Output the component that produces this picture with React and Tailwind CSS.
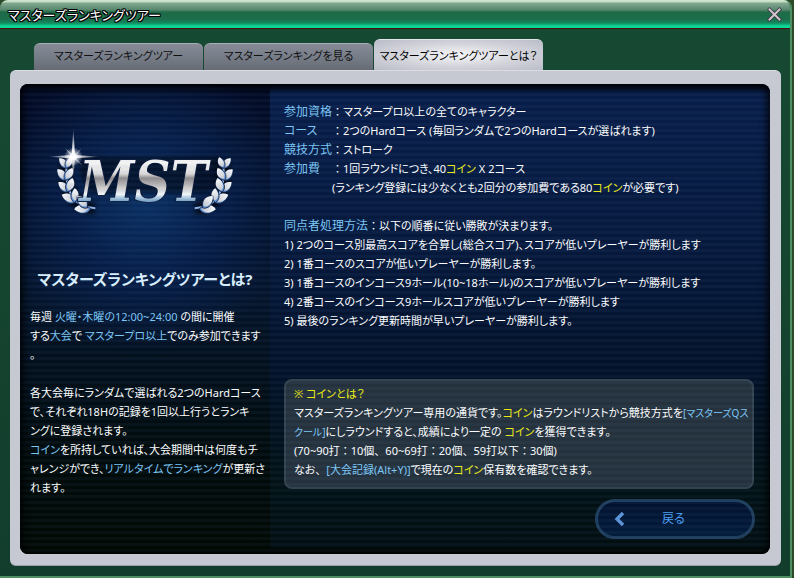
import React from "react";

const LEAVES = [
  [140, 172, -36, 34],
  [140, 172, 26, 32],
  [137, 208, -36, 38],
  [137, 208, 34, 38],
  [144, 243, -44, 38],
  [144, 243, 22, 40],
  [164, 274, -60, 42],
  [164, 274, 4, 38],
  [208, 297, -88, 44],
  [200, 291, -38, 42],
];

function Laurel() {
  return (
    <g>
      <path d="M224 296 Q128 288 140 150" fill="none" stroke="#000" strokeWidth="40" opacity="0.6" filter="url(#soft)" />
      <path d="M226 295 Q128 290 140 158" fill="none" stroke="#8fb4e6" strokeWidth="6" />
      {LEAVES.map(([x, y, angle, length], i) => (
        <g key={i} transform={`translate(${x} ${y}) rotate(${angle}) scale(${length / 34})`}>
          <path d="M0 3C-15 -4 -14 -24 -2 -35C11 -26 15 -10 0 3Z" fill="#5f93dc" stroke="#111c33" strokeWidth="2" />
          <path d="M1 -2C-12 -8 -11 -24 -2 -35C10 -27 14 -13 1 -2Z" fill="url(#leaf)" />
        </g>
      ))}
    </g>
  );
}

function Logo() {
  return (
    <svg viewBox="75 48 600 276" className="h-[92px] w-[200px]" role="img" aria-label="MST">
      <defs>
        <linearGradient id="metal" x1="0" y1="0" x2="0" y2="1">
          <stop offset="0.2" stopColor="#f4f4f4" />
          <stop offset="0.38" stopColor="#dedcdc" />
          <stop offset="0.45" stopColor="#8f8b8c" />
          <stop offset="0.6" stopColor="#cfcccc" />
          <stop offset="0.7" stopColor="#eef4f8" />
          <stop offset="0.79" stopColor="#7fa9cd" />
        </linearGradient>
        <linearGradient id="leaf" x1="0" y1="0" x2="0" y2="1">
          <stop offset="0" stopColor="#ffffff" />
          <stop offset="1" stopColor="#c3c6ce" />
        </linearGradient>
        <radialGradient id="flare">
          <stop offset="0" stopColor="#fff" />
          <stop offset="0.4" stopColor="#fff" stopOpacity="0.7" />
          <stop offset="1" stopColor="#fff" stopOpacity="0" />
        </radialGradient>
        <filter id="soft" x="-30%" y="-30%" width="160%" height="160%">
          <feGaussianBlur stdDeviation="6" />
        </filter>
      </defs>
      <path
        d="M180 140H600V215L560 250H215L180 200Z"
        fill="#000"
        opacity="0.45"
        filter="url(#soft)"
      />
      <Laurel />
      <g transform="translate(750 0) scale(-1 1)">
        <Laurel />
      </g>
      <text
        x="178"
        y="273"
        fontFamily="'DejaVu Serif Condensed', 'Liberation Serif', serif"
        fontWeight="700"
        fontStyle="italic"
        fontSize="166"
        fill="url(#metal)"
        stroke="#0d1c3c"
        strokeWidth="6"
        paintOrder="stroke"
      >
        MST
      </text>
      <circle cx="160" cy="140" r="28" fill="url(#flare)" />
      <path
        d="M160 52L165 135L240 140L165 145L160 205L155 145L80 140L155 135Z"
        fill="url(#flare)"
      />
      <path d="M135 115L162 137L185 115L163 141L188 167L160 144L133 165L157 140Z" fill="#fff" opacity="0.7" />
      <circle cx="160" cy="140" r="10" fill="#fff" />
    </svg>
  );
}

const Blue = ({ children }) => <span className="text-[#7cc6f5]">{children}</span>;
const Yellow = ({ children }) => <span className="text-[#ecec13]">{children}</span>;
const Wide = ({ children }) => <span className="[font-feature-settings:normal]">{children}</span>;

function Tab({ active, children }) {
  return (
    <button
      type="button"
      aria-pressed={Boolean(active)}
      className={
        active
          ? "h-[31px] w-[169px] rounded-t-md border-t border-[#e4e5ea] bg-[radial-gradient(ellipse_at_center,#f6f6f8_0%,#d2d3da_55%,#b9bbc8_100%)] whitespace-nowrap text-black"
          : "h-[27px] w-[169px] rounded-t-md border-t border-[#a9adb6] bg-linear-to-b from-[#868b96] via-[#777d88] to-[#666b74] pb-1 whitespace-nowrap text-[#111]"
      }
    >
      {children}
    </button>
  );
}

function Term({ label, children }) {
  return (
    <div className="flex">
      <dt className="w-12 text-xs leading-[19px] text-[#7cc6f5]">{label}</dt>
      <dd>{children}</dd>
    </div>
  );
}

export default function App() {
  return (
    <div className="min-h-screen bg-[#2c4a28] pr-0.5 font-['Noto_Sans','Noto_Sans_CJK_JP',sans-serif] text-[11px] leading-[19px] [font-feature-settings:'palt']">
      <main className="flex min-h-screen flex-col overflow-hidden rounded-t-lg border-r-2 border-b-2 border-[#4f8f63] bg-linear-to-b from-[#174a33] via-[#15442f] to-[#123d2d]">
        <header className="flex h-[29px] items-center justify-between border-b border-[#4d0a0c] bg-[linear-gradient(#d3e6d0_0px,#c0dcc0_2px,#83a991_3px,#56866c_10px,#1e6a47_12px,#1c6e4b_19px,#12895f_23px,#0ed596_26px,#08dd9a_28px)] pr-2 pl-2">
          <h1 className="pt-0.5 text-[13px] text-white [text-shadow:1px_0_#000,-1px_0_#000,0_1px_#000,0_-1px_#000,1px_1px_#000,-1px_-1px_#000,1px_-1px_#000,-1px_1px_#000]">
            マスターズランキングツアー
          </h1>
          <button type="button" aria-label="閉じる" className="size-[15px]">
            <svg viewBox="0 0 15 15" className="size-[15px]">
              <path d="M2.5 2.5L12.5 12.5M12.5 2.5L2.5 12.5" stroke="#3c3040" strokeWidth="3.4" strokeLinecap="square" />
              <path d="M2.5 2.5L12.5 12.5M12.5 2.5L2.5 12.5" stroke="#cfc6cc" strokeWidth="2" strokeLinecap="square" />
            </svg>
          </button>
        </header>

        <nav className="mt-2.5 ml-[34px] flex items-end gap-px">
          <Tab>マスターズランキングツアー</Tab>
          <Tab>マスターズランキングを見る</Tab>
          <Tab active>マスターズランキングツアーとは？</Tab>
        </nav>

        <section className="mr-[9px] mb-2.5 ml-2.5 flex flex-1 rounded-md border-t border-b border-t-[#dcdde2] border-b-[#9a9eac] bg-[#c7c9d2] pt-[13px] pr-[11px] pb-[11px] pl-2.5">
          <div className="relative flex min-w-0 flex-1 overflow-hidden rounded-lg bg-linear-to-b from-[#04112f] via-[#03101f] to-[#010805]">
            <article className="w-[250px] shrink-0 bg-[radial-gradient(ellipse_150px_150px_at_50%_120px,#0a2f62_0%,#061d47_50%,transparent_100%),linear-gradient(#030b26,#04142a_45%,#010b0b_80%,#020a05)] px-2.5 text-white">
              <div className="flex justify-center pt-[42px]">
                <Logo />
              </div>
              <h2 className="mt-[49px] text-center text-[15px] leading-6 font-bold whitespace-nowrap text-[#d9efff]">
                マスターズランキングツアーとは?
              </h2>
              <p className="mt-4 whitespace-nowrap">
                毎週 <Blue>火曜・木曜の12:00~24:00</Blue> の間に開催
                <br />
                する<Blue>大会</Blue>で <Blue>マスタープロ以上</Blue>でのみ参加できます
                <br />。
              </p>
              <p className="mt-[19px] whitespace-nowrap">
                各大会毎にランダムで選ばれる2つのHardコース
                <br />
                で、それぞれ18Hの記録を1回以上行うとランキ
                <br />
                ングに登録されます。
                <br />
                <Blue>コイン</Blue>を所持していれば、大会期間中は何度もチ
                <br />
                ャレンジができ、<Blue>リアルタイムでランキング</Blue>が更新さ
                <br />
                れます。
              </p>
            </article>

            <article className="my-1.5 flex min-w-0 flex-1 flex-col bg-[linear-gradient(#081e4a,#06193c_35%,#03122a_60%,#021216_85%,#020f12)] pt-3 pr-[15px] pb-[9px] pl-3.5 whitespace-nowrap text-white">
              <dl>
                <Term label="参加資格"><Wide>：</Wide>マスタープロ以上の全てのキャラクター</Term>
                <Term label="コース"><Wide>：</Wide>2つのHardコース (毎回ランダムで2つのHardコースが選ばれます)</Term>
                <Term label="競技方式"><Wide>：</Wide>ストローク</Term>
                <Term label="参加費">
                  <Wide>：</Wide>1回ラウンドにつき、40<Yellow>コイン</Yellow> X 2コース
                  <br />
                  (ランキング登録には少なくとも2回分の参加費である80<Yellow>コイン</Yellow>が必要です)
                </Term>
              </dl>
              <p className="mt-[19px]">
                <span className="text-xs leading-none text-[#7cc6f5]">同点者処理方法</span><Wide>：</Wide>以下の順番に従い勝敗が決まります。
              </p>
              <ol>
                <li>1) 2つのコース別最高スコアを合算し(総合スコア)、スコアが低いプレーヤーが勝利します</li>
                <li>2) 1番コースのスコアが低いプレーヤーが勝利します。</li>
                <li>3) 1番コースのインコース9ホール(10~18ホール)のスコアが低いプレーヤーが勝利します</li>
                <li>4) 2番コースのインコース9ホールスコアが低いプレーヤーが勝利します</li>
                <li>5) 最後のランキング更新時間が早いプレーヤーが勝利します。</li>
              </ol>

              <aside className="mt-auto mr-px rounded-lg border-2 border-[#33434f] bg-[#25323d] pt-[3px] pr-px pb-2 pl-2">
                <p>
                  <Yellow>※ コインとは？</Yellow>
                </p>
                <p>
                  マスターズランキングツアー専用の通貨です。<Yellow>コイン</Yellow>はラウンドリストから競技方式を
                  <span className="text-[10px] leading-none text-[#7cc6f5]">
                    [マスターズQス
                    <br />
                    クール]
                  </span>
                  にしラウンドすると、成績により一定の <Yellow>コイン</Yellow>を獲得できます。
                </p>
                <p>
                  (70~90打<Wide>：</Wide>10個<Wide>、</Wide>60~69打<Wide>：</Wide>20個<Wide>、</Wide>59打以下<Wide>：</Wide>30個)
                </p>
                <p>
                  なお<Wide>、</Wide><Blue>[大会記録(Alt+Y)]</Blue>で現在の<Yellow>コイン</Yellow>保有数を確認できます。
                </p>
              </aside>

              <button
                type="button"
                className="mt-2.5 flex h-10 w-40 items-center self-end rounded-full border-[3px] border-[#1f3d5c] bg-linear-to-b from-[#02122f] to-[#031c3c] pl-4 text-xs text-[#4ba0f5]"
              >
                <svg viewBox="0 0 10 14" className="h-3.5 w-2.5">
                  <path d="M9 1L3 7L9 13" fill="none" stroke="#5b93d6" strokeWidth="3.4" />
                </svg>
                <span className="ml-[38px]">戻る</span>
              </button>
            </article>

            <div className="pointer-events-none absolute inset-0 rounded-lg bg-[repeating-linear-gradient(transparent_0px,transparent_3px,rgba(120,160,220,0.05)_3px,rgba(120,160,220,0.05)_6px)] shadow-[inset_0_2px_8px_2px_#000]" />
          </div>
        </section>
      </main>
    </div>
  );
}
